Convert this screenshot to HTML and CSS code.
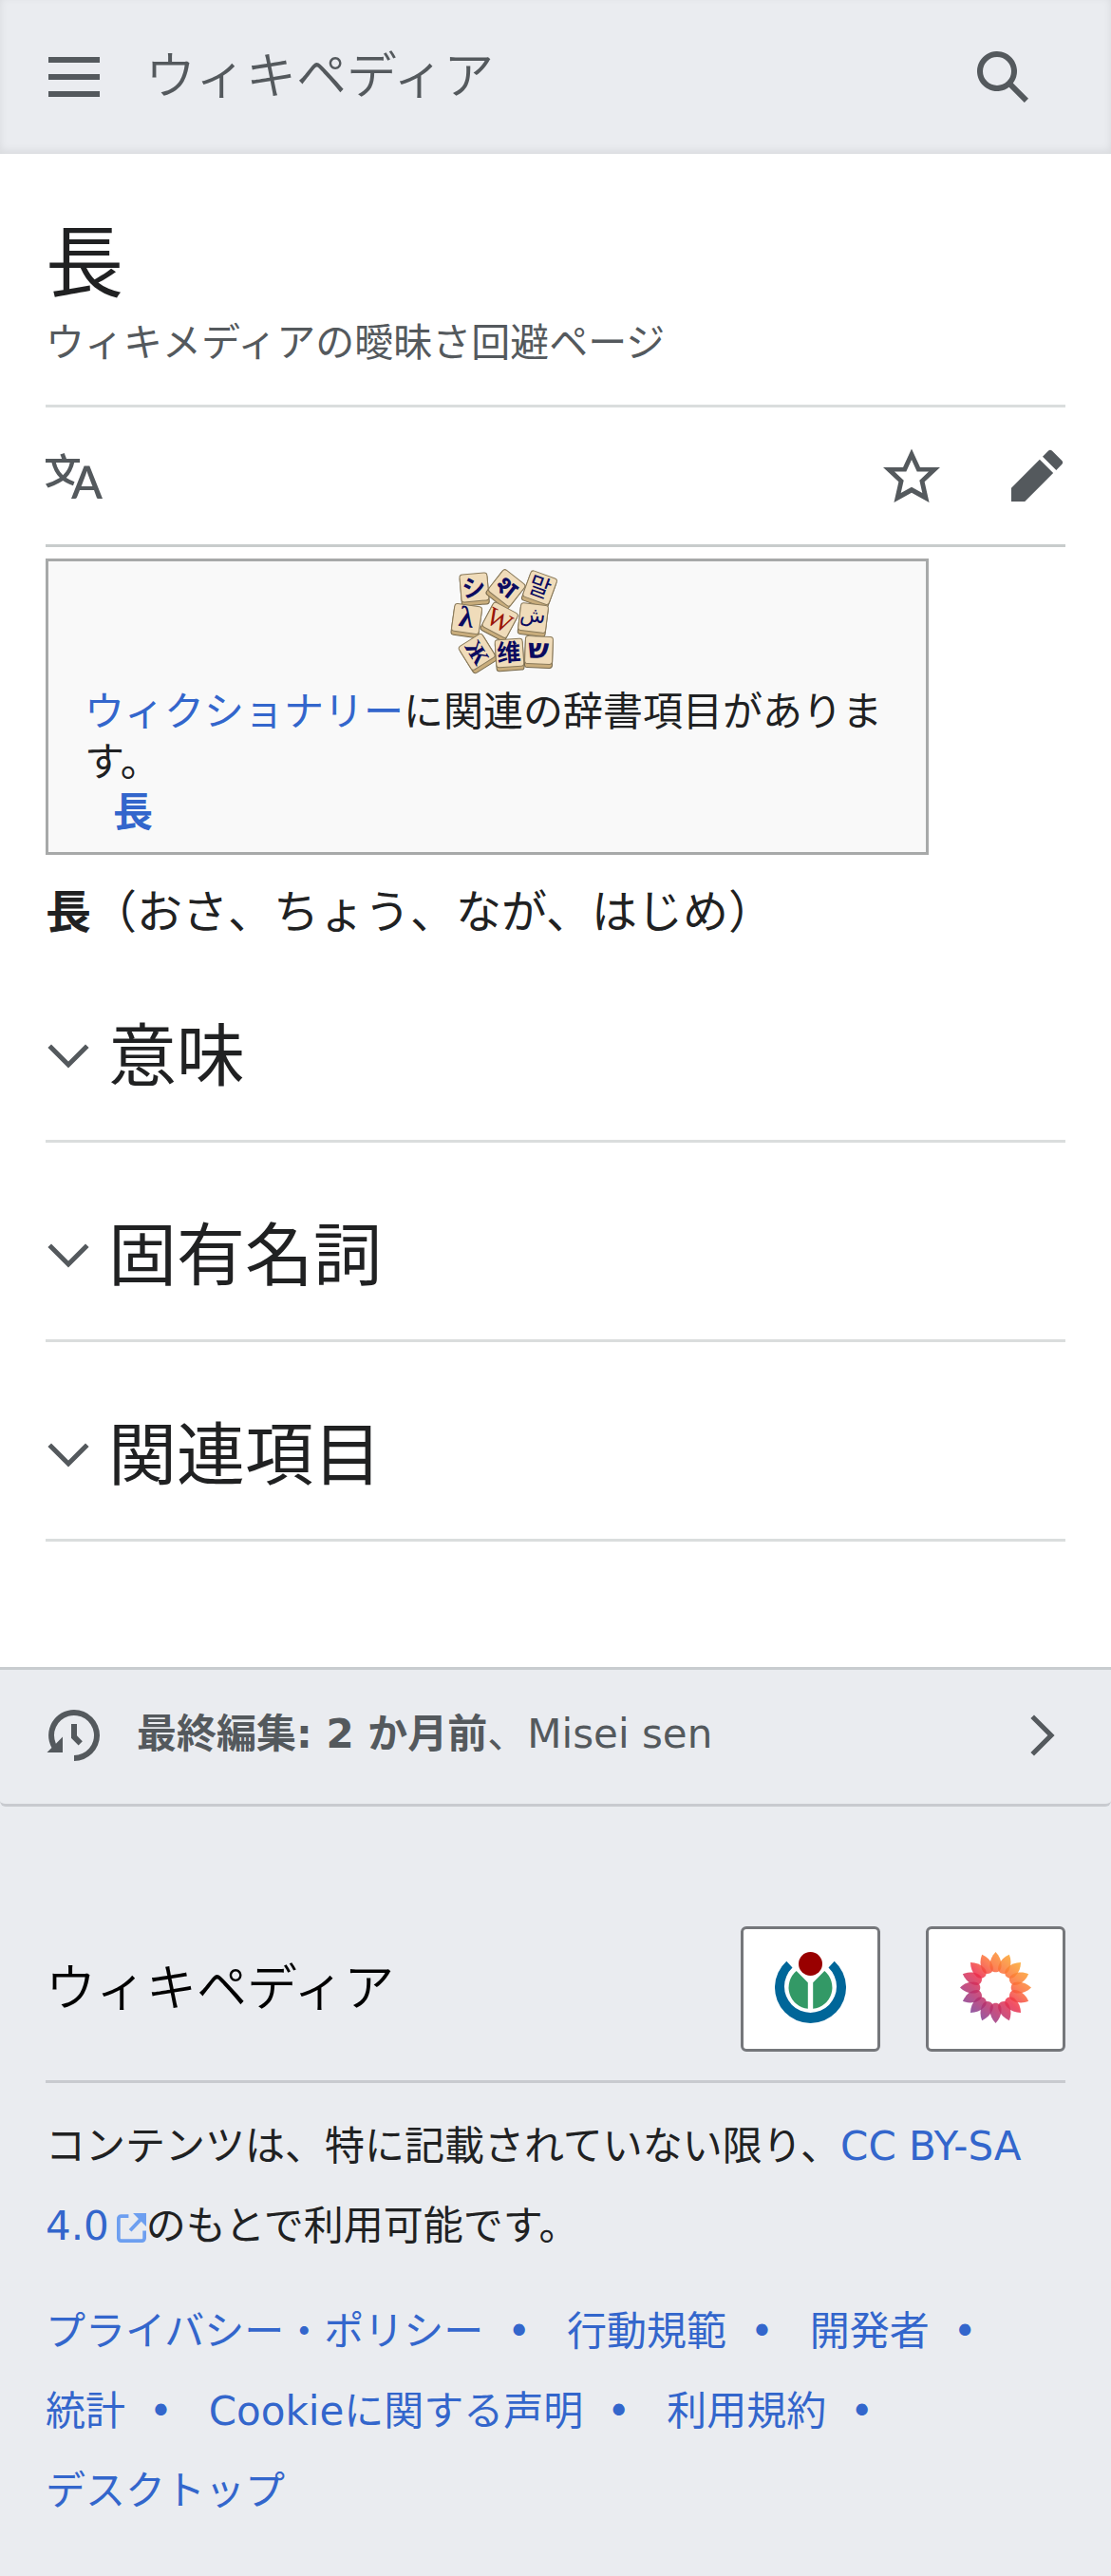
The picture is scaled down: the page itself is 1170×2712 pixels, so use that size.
FILE: index.html
```html
<!DOCTYPE html>
<html lang="ja">

<head>
    <meta charset="UTF-8">
    <meta name="viewport" content="width=device-width, initial-scale=1.0">
    <title>長 - ウィキペディア</title>
    <link rel="stylesheet" href="styles.css">
</head>

<body>

    <header class="top-bar">
        <button class="icon-button" type="button" aria-label="メニュー">
            <svg class="icon" viewBox="0 0 20 20"><path d="M1 3v2h18V3zm0 8h18V9H1zm0 6h18v-2H1z"/></svg>
        </button>
        <a class="wordmark" href="#">ウィキペディア</a>
        <button class="icon-button search" type="button" aria-label="検索">
            <svg class="icon" viewBox="0 0 20 20"><path d="M12.2 13.6a7 7 0 1 1 1.4-1.4l5.4 5.4-1.4 1.4zM13 8A5 5 0 1 0 3 8a5 5 0 0 0 10 0"/></svg>
        </button>
    </header>

    <main class="content">
        <div class="page-heading">
            <h1>長</h1>
            <p class="tagline">ウィキメディアの曖昧さ回避ページ</p>
        </div>

        <nav class="page-actions" aria-label="ページ操作">
            <a href="#" aria-label="言語">
                <svg class="icon" viewBox="0 0 20 20"><path d="M20 18h-1.44a.6.6 0 0 1-.4-.12.8.8 0 0 1-.23-.31L17 15h-5l-1 2.54a.8.8 0 0 1-.22.3.6.6 0 0 1-.4.14H9l4.55-11.47h1.89zm-3.53-4.31L14.89 9.5a12 12 0 0 1-.39-1.24q-.09.37-.19.69l-.19.56-1.58 4.19zm-6.3-1.58a13.4 13.4 0 0 1-2.91-1.41 11.46 11.46 0 0 0 2.81-5.37H12V4H7.31a4 4 0 0 0-.2-.56C6.87 2.79 6.6 2 6.6 2l-1.47.5s.4.89.6 1.5H0v1.33h2.15A11.23 11.23 0 0 0 5 10.7a17.2 17.2 0 0 1-5 2.1q.56.82.87 1.38a23.3 23.3 0 0 0 5.22-2.51 15.6 15.6 0 0 0 3.56 1.77zM3.63 5.33h4.91a8.1 8.1 0 0 1-2.45 4.45 9.1 9.1 0 0 1-2.46-4.45"/></svg>
            </a>
            <a class="watch" href="#" aria-label="ウォッチリストに追加">
                <svg class="icon" viewBox="0 0 20 20"><path d="M20 7h-7L10 .5 7 7H0l5.46 5.1-1.64 7.2L10 15.9l6.18 3.4-1.63-7.2zm-10 6.9-3.76 2.07 1-4.38L4 8.5h4.11L10 4.3l1.9 4.2H16l-3.23 3.1 1 4.38z"/></svg>
            </a>
            <a href="#" aria-label="編集">
                <svg class="icon" viewBox="0 0 20 20"><path d="m16.77 8 1.94-2a1 1 0 0 0 0-1.41l-3.34-3.3a1 1 0 0 0-1.41 0L12 3.23zM1 14.25V19h4.75l9.96-9.96-4.75-4.75z"/></svg>
            </a>
        </nav>

        <aside class="sister-box">
            <!-- Wiktionary tiles -->
            <svg class="tiles" viewBox="0 0 114 110" aria-hidden="true">
                <defs>
                    <g id="tile">
                        <rect x="-14" y="-13" width="29" height="31" rx="3" fill="#c9ad7c" stroke="#77694c" stroke-width="1"/>
                        <rect x="-14" y="-15" width="29" height="29" rx="3" fill="#f0dcba" stroke="#8b7b5b" stroke-width="1"/>
                    </g>
                </defs>
                <g transform="translate(25 20) rotate(-5)"><use href="#tile"/><text y="9" font-size="25">シ</text></g>
                <g transform="translate(59 20) rotate(38)"><use href="#tile"/><text y="8" font-size="27">श</text></g>
                <g transform="translate(94 20) rotate(20)"><use href="#tile"/><text y="8" font-size="25" class="thin">말</text></g>
                <g transform="translate(17 53) rotate(8)"><use href="#tile"/><text y="8" font-size="31" class="serif">λ</text></g>
                <g transform="translate(87 52) rotate(7)"><use href="#tile"/><text y="4" font-size="22" class="thin">ش</text></g>
                <g transform="translate(52 54) rotate(28)"><use href="#tile"/><text y="9" font-size="28" class="serif red">W</text></g>
                <g transform="translate(28 88) rotate(-32)"><use href="#tile"/><text y="8" font-size="25" class="serif" transform="rotate(90)">Ж</text></g>
                <g transform="translate(62 89) rotate(-4)"><use href="#tile"/><text y="8" font-size="25">维</text></g>
                <g transform="translate(93 86) rotate(2)"><use href="#tile"/><text y="8" font-size="29">ש</text></g>
            </svg>
            <p><a href="#">ウィクショナリー</a>に関連の辞書項目があります。</p>
            <p class="sister-link"><a href="#">長</a></p>
        </aside>

        <p class="lead"><b>長</b>（おさ、ちょう、なが、はじめ）</p>

        <h2 class="section">
            <button type="button" aria-expanded="false">
                <svg class="chevron" viewBox="0 0 20 20"><path d="m17.5 4.75-7.5 7.5-7.5-7.5L1 6.25l9 9 9-9z"/></svg>
                意味
            </button>
        </h2>
        <h2 class="section">
            <button type="button" aria-expanded="false">
                <svg class="chevron" viewBox="0 0 20 20"><path d="m17.5 4.75-7.5 7.5-7.5-7.5L1 6.25l9 9 9-9z"/></svg>
                固有名詞
            </button>
        </h2>
        <h2 class="section">
            <button type="button" aria-expanded="false">
                <svg class="chevron" viewBox="0 0 20 20"><path d="m17.5 4.75-7.5 7.5-7.5-7.5L1 6.25l9 9 9-9z"/></svg>
                関連項目
            </button>
        </h2>
    </main>

    <footer>
        <a class="last-edit" href="#">
            <svg class="icon" viewBox="0 0 20 20"><path d="M9 6v5h.06l2.48 2.47 1.41-1.41L11 10.11V6z"/><path d="M10 1a9 9 0 0 0-7.85 13.35L.5 16H6v-5.5l-2.38 2.38A7 7 0 1 1 10 17v2a9 9 0 0 0 0-18"/></svg>
            <span class="last-edit-text"><b>最終編集: 2 か月前</b>、Misei sen</span>
            <svg class="chevron" viewBox="0 0 20 20"><path d="M4.75 2.5l7.5 7.5-7.5 7.5L6.25 19l9-9-9-9z"/></svg>
        </a>

        <div class="footer-content">
            <div class="footer-top">
                <a class="wordmark dark" href="#">ウィキペディア</a>
                <a class="badge" href="#" aria-label="Wikimedia Foundation">
                    <svg viewBox="0 0 75 75">
                        <path fill="#069" d="M12.3 9.7A37.5 37.5 0 1 0 62.7 9.7L56.5 16.5A27.5 27.5 0 1 1 18.5 16.5z"/>
                        <path fill="#396" d="M34.8 32.3 22.7 20.1A22.5 22.5 0 0 0 34.8 59.8zM40.2 32.3 52.3 20.1A22.5 22.5 0 0 1 40.2 59.8z"/>
                        <circle cx="37.5" cy="12.5" r="12.5" fill="#900"/>
                    </svg>
                </a>
                <a class="badge" href="#" aria-label="MediaWiki">
                    <svg viewBox="-37 -37 74 74">
                        <defs>
                            <linearGradient id="petals" gradientUnits="userSpaceOnUse" x1="24" y1="-28" x2="-24" y2="28">
                                <stop offset="0" stop-color="#fca82a"/>
                                <stop offset=".3" stop-color="#fb6b38"/>
                                <stop offset=".52" stop-color="#ee2f49"/>
                                <stop offset=".78" stop-color="#b4306e"/>
                                <stop offset="1" stop-color="#7b3d95"/>
                            </linearGradient>
                            <path id="p1" d="M0-37C-4-33-6-28-6-23-6-18-3-16 0-16S6-18 6-23C6-28 4-33 0-37z" fill="#fff" fill-opacity=".84"/>
                            <g id="p4"><use href="#p1"/><use href="#p1" transform="rotate(22.5)"/><use href="#p1" transform="rotate(45)"/><use href="#p1" transform="rotate(67.5)"/></g>
                            <mask id="flower" maskUnits="userSpaceOnUse" x="-37" y="-37" width="74" height="74">
                                <use href="#p4"/><use href="#p4" transform="rotate(90)"/><use href="#p4" transform="rotate(180)"/><use href="#p4" transform="rotate(270)"/>
                            </mask>
                        </defs>
                        <rect x="-37" y="-37" width="74" height="74" fill="url(#petals)" mask="url(#flower)"/>
                    </svg>
                </a>
            </div>

            <p class="license">コンテンツは、特に記載されていない限り、<a href="#">CC BY-SA 4.0<svg class="external" viewBox="0 0 10 10"><path d="M4 1H1.5a.9.9 0 0 0-.9.9v6.6c0 .5.4.9.9.9h7c.5 0 .9-.4.9-.9V6" fill="none" stroke="currentColor" stroke-width="1.2"/><path d="M5.5 0H10v4.5L8.3 2.8 5 6.3l-.9-.8 3.3-3.6z" fill="currentColor"/></svg></a>のもとで利用可能です。</p>

            <ul class="footer-links">
                <li><a href="#">プライバシー・ポリシー</a></li>
                <li><a href="#">行動規範</a></li>
                <li><a href="#">開発者</a></li>
                <li><a href="#">統計</a></li>
                <li><a href="#">Cookieに関する声明</a></li>
                <li><a href="#">利用規約</a></li>
                <li><a href="#">デスクトップ</a></li>
            </ul>
        </div>
    </footer>

</body>

</html>
```
FILE: styles.css
```css
* {
    box-sizing: border-box;
}

body {
    margin: 0;
    background-color: #eaecf0;
    color: #202122;
    font-family: "DejaVu Sans", "Noto Sans CJK JP", sans-serif;
    font-size: 42px;
}

h1,
h2,
p,
ul {
    margin: 0;
    padding: 0;
    font-weight: normal;
}

a {
    color: #36c;
    text-decoration: none;
}

button {
    padding: 0;
    border: 0;
    background: none;
    color: inherit;
    font: inherit;
    cursor: pointer;
}

svg {
    display: block;
    flex: none;
}

.icon {
    width: 60px;
    height: 60px;
    fill: #54595d;
}

.chevron {
    width: 48px;
    height: 48px;
    fill: #54595d;
}

/* Top bar */
.top-bar {
    display: flex;
    align-items: center;
    height: 162px;
    padding: 0 84px 0 48px;
    box-shadow: inset 0 -3px 9px rgba(0, 0, 0, 0.08);
}

.wordmark {
    color: #54595d;
    font-family: "Liberation Serif", "Noto Sans CJK JP", serif;
    font-size: 53px;
    font-weight: 350;
    line-height: 72px;
}

.top-bar .wordmark {
    margin-left: 45px;
}

.wordmark.dark {
    margin-right: auto;
    color: #000;
}

.search {
    margin-left: auto;
}

/* Article */
.content {
    padding: 62px 48px 132px;
    background-color: #fff;
}

h1 {
    font-size: 82px;
    line-height: 108px;
}

.page-heading {
    padding-bottom: 36px;
    border-bottom: 3px solid #dadddd;
}

.tagline {
    color: #54595d;
    font-size: 41px;
    line-height: 58px;
}

.page-actions {
    display: flex;
    gap: 72px;
    padding: 42px 0;
    border-bottom: 3px solid #c8cccc;
}

.watch {
    margin-left: auto;
}

.sister-box {
    width: 930px;
    max-width: 100%;
    margin-top: 12px;
    padding: 8px 38px 15px;
    border: 3px solid #a7a9a9;
    background-color: #f9f9f9;
    line-height: 53px;
}

.tiles {
    width: 150px;
    height: 110px;
    margin: 0 auto 14px;
    padding-left: 36px;
    overflow: visible;
    font-family: "DejaVu Sans", "Noto Sans", "Noto Sans CJK JP", sans-serif;
    font-weight: bold;
    text-anchor: middle;
    fill: #0b0b60;
}

.tiles .serif {
    font-family: "Liberation Serif", serif;
}

.tiles .thin {
    font-family: "Noto Sans CJK KR", sans-serif;
    font-weight: normal;
}

.tiles .red {
    fill: #991508;
    font-weight: normal;
}

.sister-link {
    padding-left: 30px;
    font-weight: bold;
}

.lead {
    margin-top: 28px;
    font-size: 48px;
    line-height: 65px;
}

.section {
    border-bottom: 3px solid #dadddd;
    font-size: 72px;
    line-height: 96px;
}

.section button {
    display: flex;
    align-items: center;
    gap: 18px;
    width: 100%;
    padding: 71px 0 40px;
    text-align: left;
}

/* Footer */
.last-edit {
    display: flex;
    align-items: center;
    gap: 36px;
    height: 147px;
    padding: 0 48px 3px;
    border-top: 3px solid #c8cccf;
    border-bottom: 3px solid #c8cacf;
    border-radius: 0 0 6px 6px;
    color: #54595d;
}

.last-edit-text {
    flex: 1;
    padding-bottom: 12px;
}

.footer-content {
    padding: 126px 48px 48px;
}

.footer-top {
    display: flex;
    align-items: center;
    gap: 48px;
    padding-bottom: 30px;
    border-bottom: 3px solid #c8cacf;
}

.badge {
    display: flex;
    align-items: center;
    justify-content: center;
    width: 147px;
    height: 132px;
    padding-bottom: 3px;
    border: 3px solid #75777b;
    border-radius: 6px;
    background-color: #fff;
}

.badge svg {
    width: 75px;
    height: 75px;
}

.license {
    margin-top: 25px;
    line-height: 84px;
}

.external {
    display: inline-block;
    width: 31px;
    height: 31px;
    margin-left: 8px;
    color: #6d9ff0;
    vertical-align: -3px;
}

.footer-links {
    display: flex;
    flex-wrap: wrap;
    column-gap: 38px;
    margin-top: 27px;
    list-style: none;
    line-height: 84px;
}

.footer-links li:not(:last-child)::after {
    content: "•";
    margin-left: 25px;
    color: #36c;
}
```
